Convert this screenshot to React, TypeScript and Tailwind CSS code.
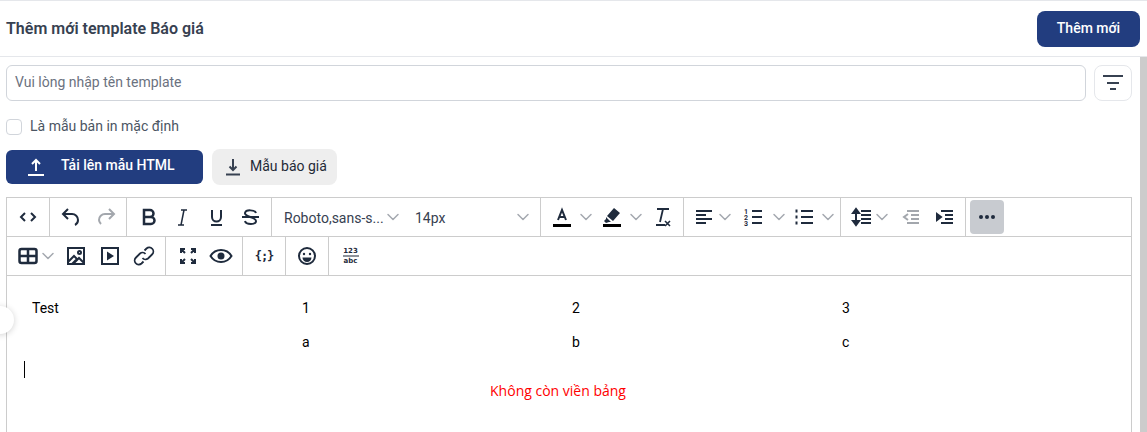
import { ChevronDown } from "lucide-react";
import type { ReactNode } from "react";

const dark = "#1f2b3d";

const Ico = ({ children, muted }: { children: ReactNode; muted?: boolean }) => (
  <svg width="24" height="24" viewBox="0 0 24 24" fill="none" stroke={muted ? "#a3a7ad" : dark} strokeWidth="2" className="block shrink-0">
    {children}
  </svg>
);

const Caret = () => <ChevronDown className="-mx-[2.5px] h-[20px] w-[20px] shrink-0 text-[#a5a9b0]" strokeWidth={1.8} />;

const Group = ({ className, children }: { className: string; children: ReactNode }) => (
  <div className={`flex h-full shrink-0 items-center border-r border-[#cccccc] ${className}`}>{children}</div>
);

export default function App() {
  return (
    <div className="relative h-[432px] w-[1147px] overflow-hidden border-t border-[#e5e7eb] bg-white font-['Roboto',sans-serif] text-[14px]">
      <div className="flex h-[56px] items-center justify-between border-b border-[#e5e7eb] pl-[6px] pr-[7px]">
        <h1 className="text-[16px] font-semibold text-[#374151]">Thêm mới template Báo giá</h1>
        <button className="h-[36px] w-[103px] rounded-[8px] bg-[#223d7f] text-[14px] font-medium text-white">Thêm mới</button>
      </div>

      <div className="flex">
        <div className="w-[1140px] pl-[6px] pr-[8px] pt-[8px]">
          <div className="flex gap-[8px]">
            <div className="flex h-[36px] flex-1 items-center rounded-[6px] border border-[#d1d5db] pb-[2px] pl-[8px] text-[#6b7280]">Vui lòng nhập tên template</div>
            <div className="flex h-[36px] w-[38px] items-center justify-center rounded-[8px] border border-[#e5e7eb]">
              <svg width="20" height="16" viewBox="0 0 20 16" fill="none" stroke="#374151" strokeWidth="2">
                <path d="M0 1h20M4 8h12M7 14h6" />
              </svg>
            </div>
          </div>

          <label className="mt-[18px] flex h-[16px] items-center gap-[8px] text-[#4b5563]">
            <span className="h-[16px] w-[16px] rounded-[4px] border border-[#d1d5db]" />
            <span className="-translate-y-px">Là mẫu bản in mặc định</span>
          </label>

          <div className="mt-[15px] flex gap-[9px]">
            <button className="flex h-[34px] w-[197px] items-center rounded-[6px] bg-[#223d7f] pl-[21px] font-medium text-white">
              <svg width="18" height="18" viewBox="0 0 18 18" fill="none" stroke="white" strokeWidth="2">
                <path d="M9 13V2M5 6l4-4 4 4M1 17h16" />
              </svg>
              <span className="ml-[16px] -translate-y-[2px]">Tải lên mẫu HTML</span>
            </button>
            <button className="flex h-[36px] w-[125px] -translate-y-px items-center rounded-[8px] bg-[#eeeeee] pl-[13px] text-[#1f2937]">
              <svg width="16" height="18" viewBox="0 0 16 18" fill="none" stroke="#374151" strokeWidth="2">
                <path d="M8 1v11M4.500 8.500 8 12l3.500-3.500M1 16.500h14" />
              </svg>
              <span className="ml-[9px] -translate-y-px">Mẫu báo giá</span>
            </button>
          </div>

          <div className="mt-[11px] h-[241px] border border-[#cccccc]">
            <div className="flex h-[39px] items-center border-b border-[#cccccc] text-[#222222]">
              <Group className="w-[43px] justify-center">
                <svg width="18" height="12" viewBox="0 0 18 12" fill="none" stroke={dark} strokeWidth="2">
                  <path d="M6 2 2 6l4 4M12 2l4 4-4 4" />
                </svg>
              </Group>
              <Group className="w-[77px] gap-[14px] pl-[8px]">
                <Ico>
                  <path d="M10 4 5 9l5 5M5 9h9a6 6 0 0 1 6 6c0 2-1 4-3 5" />
                </Ico>
                <Ico muted>
                  <path d="M13 4l5 5-5 5M18 9H9a6 6 0 0 0-6 6c0 2 1 3 2 4" />
                </Ico>
              </Group>
              <Group className="w-[145px] gap-[9px] pl-[10px]">
                <Ico>
                  <path d="M7 5h6a3.500 3.500 0 0 1 0 7H7zM7 12h7a3.500 3.500 0 0 1 0 7H7z" strokeWidth="2.500" />
                </Ico>
                <Ico>
                  <path d="M11 5h6M8 20h6M14 5l-3 15" strokeWidth="1.500" />
                </Ico>
                <Ico>
                  <path d="M9 5v7a4.500 4.500 0 0 0 9 0V5M8 20h11" />
                </Ico>
                <Ico>
                  <path d="M6 12h17M20 8c-1-3-10-4-11 0s11 4 11 8-10 4-11 0" />
                </Ico>
              </Group>
              <Group className="w-[269px] pl-[12px]">
                <span className="w-[101px] translate-y-px truncate text-[#374151]">Roboto,sans-s...</span>
                <Caret />
                <span className="ml-[15px] w-[100px] translate-y-px text-[#374151]">14px</span>
                <Caret />
              </Group>
              <Group className="w-[143px] pl-[9px]">
                <svg width="24" height="24" viewBox="0 0 24 24" className="shrink-0">
                  <path d="M8 15 12 5l4 10M9.500 12h5" fill="none" stroke={dark} strokeWidth="2" />
                  <path d="M3 19h18v3H3z" fill="#000" />
                </svg>
                <span className="ml-[4px]"><Caret /></span>
                <svg width="24" height="24" viewBox="0 0 24 24" className="ml-[7px] shrink-0">
                  <path d="M14 3l6 5-7 8-6-5zM6 12l5 5-2 0-3 1-2-2 2-2z" fill={dark} />
                  <path d="M3 19h18v3H3z" fill="#000" />
                </svg>
                <span className="ml-[4px]"><Caret /></span>
                <span className="ml-[7px]">
                  <Ico>
                    <path d="M7 4h12M13 4 10 17M6 20h9" strokeWidth="1.800" />
                    <path d="M15 16l5 5M20 16l-5 5" strokeWidth="1.600" />
                  </Ico>
                </span>
              </Group>
              <Group className="w-[157px] pl-[9px]">
                <Ico>
                  <path d="M3 6h16M3 10h10M3 14h16M3 18h10" />
                </Ico>
                <Caret />
                <span className="ml-[9px]">
                  <Ico>
                    <path d="M11 6h10M11 12h10M11 18h10" />
                    <text x="3" y="9" fontSize="7" fontFamily="Roboto" fontWeight="700" fill={dark} stroke="none">1</text>
                    <text x="3" y="15" fontSize="7" fontFamily="Roboto" fontWeight="700" fill={dark} stroke="none">2</text>
                    <text x="3" y="21" fontSize="7" fontFamily="Roboto" fontWeight="700" fill={dark} stroke="none">3</text>
                  </Ico>
                </span>
                <span className="ml-[6px]"><Caret /></span>
                <span className="ml-[6px]">
                  <Ico>
                    <path d="M9 6h12M9 12h12M9 18h12" />
                    <path d="M3.500 6h2M3.500 12h2M3.500 18h2" strokeWidth="3" />
                  </Ico>
                </span>
                <span className="ml-[4px]"><Caret /></span>
              </Group>
              <Group className="w-[125px] pl-[9px]">
                <Ico>
                  <path d="M11 6h10M11 10h10M11 14h10M11 18h10" />
                  <path d="M6 5v14" />
                  <path d="M3 8l3-4 3 4zM3 16l3 4 3-4z" fill={dark} />
                </Ico>
                <Caret />
                <span className="ml-[10px]">
                  <Ico muted>
                    <path d="M8 6h12M12 10h8M12 14h8M8 18h12M9 9l-4 3 4 3" />
                  </Ico>
                </span>
                <span className="ml-[10px]">
                  <Ico>
                    <path d="M8 6h12M12 10h8M12 14h8M8 18h12" />
                    <path d="M4 9l4 3-4 3z" fill={dark} />
                  </Ico>
                </span>
              </Group>
              <div className="flex h-full items-center pl-[4px]">
                <div className="flex h-[34px] w-[34px] items-center justify-center rounded-[4px] bg-[#c8cbd0]">
                  <svg width="16" height="4" viewBox="0 0 16 4" fill={dark}>
                    <circle cx="2" cy="2" r="2" />
                    <circle cx="8" cy="2" r="2" />
                    <circle cx="14" cy="2" r="2" />
                  </svg>
                </div>
              </div>
            </div>

            <div className="flex h-[39px] items-center border-b border-[#cccccc]">
              <Group className="w-[159px] pl-[9px]">
                <Ico>
                  <rect x="3.500" y="5" width="17" height="14" rx="2" strokeWidth="2.500" />
                  <path d="M3 12h18M12 5v14" strokeWidth="2.500" />
                </Ico>
                <Caret />
                <span className="ml-[9px]">
                  <Ico>
                    <rect x="4" y="4" width="16" height="16" />
                    <circle cx="15.500" cy="8.500" r="1.500" />
                    <path d="M4 18l6-6 3 3-5 5M10 19l5-5 5 5" />
                  </Ico>
                </span>
                <span className="ml-[10px]">
                  <Ico>
                    <rect x="4" y="4" width="16" height="16" />
                    <path d="M9 7.500v9l7-4.500z" fill={dark} stroke="none" />
                  </Ico>
                </span>
                <span className="ml-[10px]">
                  <Ico>
                    <path d="M10.500 14a4 4 0 0 0 5.500.5l4-4a4 4 0 0 0-5.500-6l-2 2M13.500 10a4 4 0 0 0-5.500-.5l-4 4a4 4 0 0 0 5.500 6l2-2" strokeWidth="1.800" />
                  </Ico>
                </span>
              </Group>
              <Group className="w-[77px] pl-[10px]">
                <Ico>
                  <path d="M5 5l4 4M5 9V5h4M19 5l-4 4M15 5h4v4M5 19l4-4M5 15v4h4M19 19l-4-4M15 19h4v-4" />
                </Ico>
                <span className="ml-[9px]">
                  <Ico>
                    <path d="M1.500 12c5-8 16-8 21 0-5 8-16 8-21 0z" />
                    <circle cx="12" cy="12" r="3.500" fill={dark} stroke="none" />
                  </Ico>
                </span>
              </Group>
              <Group className="w-[43px] justify-center">
                <span className="whitespace-nowrap font-['DejaVu_Sans_Mono',monospace] text-[12px] font-bold tracking-[-1px] text-[#1f2b3d]">{"{;}"}</span>
              </Group>
              <Group className="w-[43px] justify-center">
                <Ico>
                  <circle cx="12" cy="12" r="8" />
                  <circle cx="9" cy="10" r="1.200" fill={dark} stroke="none" />
                  <circle cx="15" cy="10" r="1.200" fill={dark} stroke="none" />
                  <path d="M7.500 13.500h9a4.500 4.500 0 0 1-9 0z" fill={dark} stroke="none" />
                </Ico>
              </Group>
              <div className="flex w-[43px] flex-col items-center font-['DejaVu_Sans',sans-serif] text-[7px] font-bold leading-[8px] text-[#1f2b3d]">
                <span>123</span>
                <span className="h-[2px] w-[16px] bg-[#8d929a]" />
                <span>abc</span>
              </div>
            </div>

            <div className="pl-[17px] pt-[15px] text-black">
              <div className="flex h-[34px] items-center">
                <span className="w-[270px] pl-[8px]">Test</span>
                <span className="w-[270px] pl-[8px]">1</span>
                <span className="w-[270px] pl-[8px]">2</span>
                <span className="w-[270px] pl-[8px]">3</span>
              </div>
              <div className="flex h-[34px] items-center">
                <span className="w-[270px] pl-[8px]" />
                <span className="w-[270px] pl-[8px]">a</span>
                <span className="w-[270px] pl-[8px]">b</span>
                <span className="w-[270px] pl-[8px]">c</span>
              </div>
              <div className="mt-[2px] h-[17px] w-px bg-black" />
              <p className="mt-[2px] w-[1068px] text-center font-['Open_Sans',sans-serif] text-[14px] text-[#ff0000]">Không còn viền bảng</p>
            </div>
          </div>
        </div>
        <div className="h-[375px] w-[7px] bg-[#cccccc]" />
      </div>

      <div className="absolute left-[-14px] top-[305px] h-[28px] w-[28px] rounded-full bg-white shadow-[0_1px_6px_rgba(0,0,0,0.18)]" />
    </div>
  );
}
